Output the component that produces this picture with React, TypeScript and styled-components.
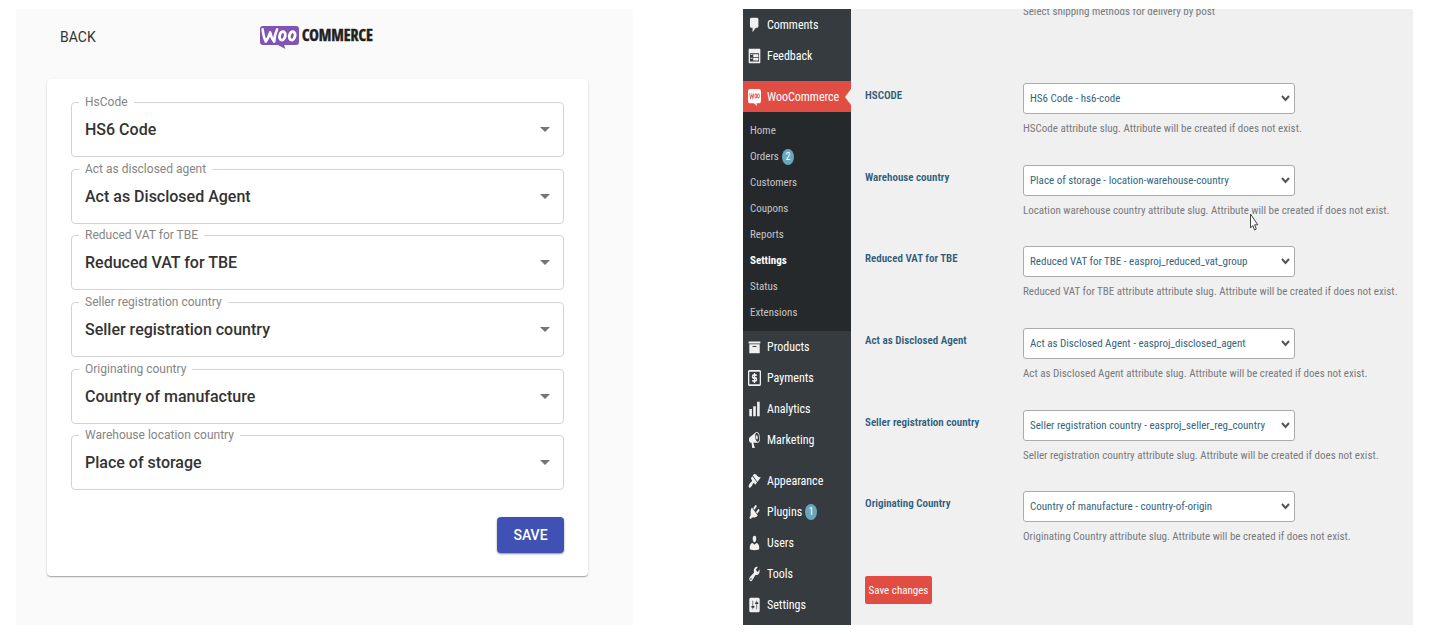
import React from "react";
import styled, { createGlobalStyle } from "styled-components";

const GlobalStyle = createGlobalStyle`
  *, *::before, *::after { box-sizing: border-box; }
  body { margin: 0; background: #fff; }
  button, select { font: inherit; margin: 0; }
  ul { list-style: none; margin: 0; padding: 0; }
`;

const Page = styled.main`
  display: grid;
  grid-template-columns: 617fr 670fr;
  gap: 110px;
  padding: 9px 26px 17px 16px;
`;

/* ---------- Merchant dashboard ---------- */

const Dashboard = styled.section`
  background: #fafafa;
  padding: 0 45px 49px 31px;
  font-family: Roboto, "Liberation Sans", sans-serif;
`;

const TopBar = styled.header`
  display: grid;
  grid-template-columns: 1fr auto 1fr;
  align-items: center;
  height: 70px;
  padding-bottom: 15px;
`;

const BackButton = styled.button`
  justify-self: start;
  padding: 0 13px;
  border: 0;
  background: none;
  color: #333;
  font-size: 14px;
  line-height: 24px;
`;

const Card = styled.form`
  padding: 23px 24px;
  border-radius: 4px;
  background: #fff;
  box-shadow: 0 1px 1px rgba(0, 0, 0, 0.28), 0 1px 3px rgba(0, 0, 0, 0.1);
`;

const FieldList = styled.div`
  display: grid;
  grid-auto-rows: 1fr;
  min-height: 400px;
`;

const Field = styled.div`
  position: relative;
`;

const FieldLabel = styled.label`
  position: absolute;
  top: -8px;
  left: 8px;
  padding: 0 6px;
  background: #fff;
  color: #858585;
  font-size: 12px;
  line-height: 16px;
`;

const FieldSelect = styled.select`
  appearance: none;
  display: block;
  width: 100%;
  height: 55px;
  padding: 0 40px 0 13px;
  border: 1px solid #d3d3d3;
  border-radius: 4px;
  background: #fff;
  color: #333;
  font-size: 16px;
  font-weight: 500;
`;

const FieldArrow = styled.svg`
  position: absolute;
  top: 25px;
  right: 14px;
  pointer-events: none;
`;

const Actions = styled.div`
  display: flex;
  justify-content: flex-end;
  padding-top: 15px;
`;

const SaveButton = styled.button`
  width: 67px;
  height: 36px;
  border: 0;
  border-radius: 4px;
  background: #3f51b5;
  color: #fff;
  font-size: 14px;
  font-weight: 500;
  box-shadow: 0 1px 2px rgba(0, 0, 0, 0.45);
`;

/* ---------- Store admin ---------- */

const Admin = styled.section`
  display: grid;
  grid-template-columns: 108px 1fr;
  overflow: hidden;
  background: #f0f0f0;
  font-family: "Roboto Condensed", Roboto, sans-serif;
  font-size: 11px;
`;

const Sidebar = styled.nav`
  background: #363b3f;
`;

const MenuGroup = styled.ul`
  margin-bottom: 10px;
`;

const MenuLink = styled.a<{ $active?: boolean }>`
  position: relative;
  display: flex;
  align-items: center;
  gap: 6px;
  height: 31px;
  padding-left: 5px;
  background: ${(p) => (p.$active ? "#e14d43" : "transparent")};
  color: #fff;
  font-size: 12px;
  text-decoration: none;
`;

const ActiveNotch = styled.svg`
  position: absolute;
  top: 8px;
  right: 0;
`;

const Submenu = styled.ul`
  display: grid;
  grid-auto-rows: 1fr;
  min-height: 219px;
  padding: 6px 0;
  background: #26292c;
`;

const SubLink = styled.a<{ $current?: boolean }>`
  display: flex;
  align-items: center;
  height: 100%;
  padding-left: 7px;
  color: ${(p) => (p.$current ? "#fff" : "#c3c4c5")};
  font-weight: ${(p) => (p.$current ? 700 : 400)};
  text-decoration: none;
`;

const Count = styled.span`
  display: inline-flex;
  align-items: center;
  justify-content: center;
  width: 12px;
  height: 16px;
  margin-left: 3px;
  border-radius: 50%;
  background: #69a8bb;
  color: #fff;
  font-size: 10px;
  font-weight: 400;
`;

const Content = styled.form`
  padding: 0 14px 21px;
`;

const SettingRow = styled.div`
  display: grid;
  grid-template-columns: 158px 1fr;
  align-items: start;
`;

const ShippingRow = styled(SettingRow)`
  margin: -5px 0 63px;
`;

const SettingList = styled.div`
  display: grid;
  grid-auto-rows: 1fr;
  min-height: 490px;
`;

const SettingLabel = styled.label`
  color: #2f5d7c;
  font-weight: 600;
  line-height: 26px;
`;

const SelectBox = styled.div`
  position: relative;
  width: 272px;
  margin-bottom: 7px;
`;

const SettingSelect = styled.select`
  appearance: none;
  display: block;
  width: 100%;
  height: 31px;
  padding: 0 26px 0 6px;
  border: 1px solid #a9abad;
  border-radius: 3px;
  background: #fff;
  color: #33657f;
`;

const Chevron = styled.svg`
  position: absolute;
  top: 12px;
  right: 5px;
  pointer-events: none;
`;

const Help = styled.p`
  grid-column: 2;
  margin: 0;
  color: #777a7d;
  line-height: 16px;
  white-space: nowrap;
`;

const SaveChanges = styled.button`
  display: block;
  width: 67px;
  height: 28px;
  margin-top: 3px;
  padding: 0;
  border: 0;
  border-radius: 2px;
  background: #e14d43;
  color: #fff;
`;

const Pointer = styled.svg`
  position: absolute;
  top: 48px;
  left: 227px;
  pointer-events: none;
`;

/* ---------- Drawings ---------- */

const WooLogo = () => (
  <svg width="117" height="24" viewBox="0 0 117 24" role="img" aria-label="WooCommerce">
    <path
      d="M4 1h33a3 3 0 0 1 3 3v13a3 3 0 0 1-3 3H25l1.500 4L19 20H4a3 3 0 0 1-3-3V4a3 3 0 0 1 3-3z"
      fill="#7f54b3"
    />
    <g fill="none" stroke="#fff" strokeLinecap="round" strokeLinejoin="round">
      <path d="M3.600 4.400C4.200 9 5.200 13.500 6.800 16.600 8.600 14 10.200 10.600 11.200 7.400c.7 4 2 7 4 9.200.2-4.600 1-8.600 2.900-12.200" strokeWidth="2.600" />
      <ellipse cx="23.400" cy="10.800" rx="2.800" ry="4.300" transform="rotate(14 23.400 10.800)" strokeWidth="2.800" />
      <ellipse cx="33.200" cy="10.800" rx="2.800" ry="4.300" transform="rotate(14 33.200 10.800)" strokeWidth="2.800" />
    </g>
    <text x="43" y="16" fill="#1f1f1f" stroke="#1f1f1f" strokeWidth="0.500" fontFamily="'Open Sans Condensed', 'Roboto Condensed', sans-serif" fontWeight="700" fontSize="16">
      COMMERCE
    </text>
  </svg>
);

const iconPaths = {
  comments: "M5 2h9c1.100 0 2 .9 2 2v7c0 1.100-.9 2-2 2h-2l-5 5v-5H5c-1.100 0-2-.9-2-2V4c0-1.100.9-2 2-2z",
  feedback:
    "M2 2h16c.55 0 1 .45 1 1v14c0 .55-.45 1-1 1H2c-.55 0-1-.45-1-1V3c0-.55.45-1 1-1zm15 14V7H3v9h14zM4 8v1h3V8H4zm4 0v3h8V8H8zm-4 4v1h3v-1H4zm4 0v3h8v-3H8z",
  products: "M19 4v2H1V4h18zM2 7h16v10H2V7zm11 3V9H7v1h6z",
  analytics: "M18 18V2h-4v16h4zm-6 0V7H8v11h4zm-6 0v-8H2v8h4z",
  marketing:
    "M18.150 5.940c.46 1.620.38 3.220-.02 4.480-.42 1.280-1.260 2.180-2.300 2.480-.16.06-.26.06-.4.06-.06.02-.12.02-.18.02-.06.02-.14.02-.22.02h-6.800l2.220 5.500c.02.14-.06.26-.14.34-.08.1-.24.16-.34.16H6.950c-.1 0-.26-.06-.34-.16-.08-.08-.16-.2-.14-.34l-1-5.500H4.250l-.02-.02c-.5.06-1.080-.18-1.540-.62s-.88-1.080-1.060-1.880c-.24-.8-.2-1.560-.02-2.200.18-.62.58-1.080 1.060-1.300l.02-.02 9-5.400c.1-.06.18-.1.24-.16.06-.04.14-.08.24-.12.16-.08.28-.12.5-.18 1.040-.3 2.240.1 3.220.98s1.840 2.240 2.260 3.860zm-2.580 5.980h-.02c.4-.1.74-.34 1.040-.7.58-.7.86-1.760.86-3.040 0-.64-.1-1.300-.28-1.980-.34-1.360-1.020-2.500-1.780-3.240s-1.680-1.100-2.460-.88c-.82.22-1.400.96-1.700 2-.32 1.040-.28 2.360.06 3.720.38 1.360 1 2.500 1.800 3.240.78.74 1.620 1.100 2.480.88zm-2.540-7.080c.22-.04.42-.02.62.04.38.16.76.48 1.020 1s.42 1.200.42 1.780c0 .3-.04.56-.12.8-.18.48-.44.84-.86.94-.34.1-.8-.06-1.140-.4s-.64-.86-.78-1.500c-.18-.62-.12-1.240.02-1.720s.48-.84.82-.94z",
  appearance:
    "M14.480 11.060L7.410 3.990l1.500-1.500c.5-.56 2.300-.47 3.510.32 1.210.8 1.430 1.280 2.910 2.100 1.180.64 2.450 1.260 4.450.85zm-.71.71L6.700 4.700 4.930 6.470c-.39.39-.39 1.020 0 1.410l1.060 1.060c.39.39.39 1.030 0 1.420-.6.6-1.430 1.110-2.210 1.690-.35.26-.7.53-1.010.84C1.430 14.230.4 16.080 1.400 17.070c.99 1 2.840-.03 4.180-1.360.31-.31.58-.66.85-1.020.57-.78 1.080-1.610 1.690-2.210.39-.39 1.020-.39 1.410 0l1.060 1.060c.39.39 1.020.39 1.410 0z",
  plugins:
    "M13.110 4.360L9.870 7.600 8 5.730l3.240-3.240c.35-.34 1.050-.2 1.560.32.52.51.66 1.210.31 1.550zm-8 1.770l.91-1.120 9.010 9.010-1.190.84c-.71.71-2.630 1.160-3.820 1.160H6.140L4.900 17.260c-.59.59-1.540.59-2.120 0-.59-.58-.59-1.530 0-2.120l1.240-1.240v-3.880c0-1.130.4-3.190 1.090-3.890zm7.260 3.970l3.240-3.240c.34-.35 1.040-.21 1.550.31.52.51.66 1.210.31 1.550l-3.240 3.250z",
  users:
    "M10 9.250c-2.270 0-2.730-3.440-2.730-3.440C7 4.020 7.820 2 9.970 2c2.160 0 2.980 2.020 2.710 3.810 0 0-.41 3.440-2.680 3.440zm0 2.570L12.720 10c2.390 0 4.520 2.330 4.520 4.530v2.490s-3.650 1.130-7.240 1.130c-3.650 0-7.240-1.130-7.240-1.130v-2.490c0-2.250 1.940-4.480 4.470-4.480z",
  tools:
    "M16.680 9.770c-1.340 1.340-3.300 1.670-4.950.99l-5.410 6.520c-.99.99-2.590.99-3.580 0s-.99-2.590 0-3.570l6.520-5.420c-.68-1.650-.35-3.610.99-4.950 1.280-1.280 3.120-1.620 4.720-1.060l-2.890 2.890 2.820 2.820 2.860-2.870c.53 1.580.18 3.390-1.080 4.650zM3.810 16.210c.4.39 1.040.39 1.430 0 .4-.4.4-1.040 0-1.430-.39-.4-1.030-.4-1.430 0-.39.39-.39 1.030 0 1.430z",
  settings:
    "M18 16V4c0-1.100-.9-2-2-2H4c-1.100 0-2 .9-2 2v12c0 1.100.9 2 2 2h12c1.100 0 2-.9 2-2zM8 11h1c.55 0 1 .45 1 1s-.45 1-1 1H8v1.500c0 .28-.22.5-.5.5s-.5-.22-.5-.5V13H6c-.55 0-1-.45-1-1s.45-1 1-1h1V5.500c0-.28.22-.5.5-.5s.5.22.5.5V11zm5-2h-1c-.55 0-1-.45-1-1s.45-1 1-1h1V5.500c0-.28.22-.5.5-.5s.5.22.5.5V7h1c.55 0 1 .45 1 1s-.45 1-1 1h-1v5.500c0 .28-.22.5-.5.5s-.5-.22-.5-.5V9z",
};

type IconName = keyof typeof iconPaths | "payments" | "woo";

const IconSvg = styled.svg`
  flex: none;
`;

const MenuIcon = ({ name }: { name: IconName }) => (
  <IconSvg width="13" height="18" viewBox="0 0 20 20" preserveAspectRatio="none" fill="#f0f0f1" aria-hidden="true">
    {name === "woo" && (
      <>
        <path d="M3 1h14a3 3 0 0 1 3 3v10a3 3 0 0 1-3 3h-4l1 3-5-3H3a3 3 0 0 1-3-3V4a3 3 0 0 1 3-3z" fill="#fff" />
        <g fill="none" stroke="#e14d43" strokeWidth="1.200">
          <path d="M2.500 6l1.500 5.500L6 7l1.500 4.500L9 6" />
          <ellipse cx="12" cy="8.700" rx="1.400" ry="2.400" />
          <ellipse cx="16" cy="8.700" rx="1.400" ry="2.400" />
        </g>
      </>
    )}
    {name === "payments" && (
      <g fill="none" stroke="#f0f0f1">
        <rect x="1" y="2" width="18" height="16" rx="1" strokeWidth="2" />
        <path d="M13.500 6.800H8.500q-1.700 0-1.700 1.600t1.700 1.600h3q1.700 0 1.700 1.600t-1.700 1.600H6.500M10 4.500v11" strokeWidth="2" />
      </g>
    )}
    {name !== "woo" && name !== "payments" && <path d={iconPaths[name]} fillRule="evenodd" />}
  </IconSvg>
);

/* ---------- Data ---------- */

const dashboardFields = [
  ["HsCode", "HS6 Code"],
  ["Act as disclosed agent", "Act as Disclosed Agent"],
  ["Reduced VAT for TBE", "Reduced VAT for TBE"],
  ["Seller registration country", "Seller registration country"],
  ["Originating country", "Country of manufacture"],
  ["Warehouse location country", "Place of storage"],
];

const settings = [
  ["HSCODE", "HS6 Code - hs6-code", "HSCode attribute slug. Attribute will be created if does not exist."],
  ["Warehouse country", "Place of storage - location-warehouse-country", "Location warehouse country attribute slug. Attribute will be created if does not exist."],
  ["Reduced VAT for TBE", "Reduced VAT for TBE - easproj_reduced_vat_group", "Reduced VAT for TBE attribute attribute slug. Attribute will be created if does not exist."],
  ["Act as Disclosed Agent", "Act as Disclosed Agent - easproj_disclosed_agent", "Act as Disclosed Agent attribute slug. Attribute will be created if does not exist."],
  ["Seller registration country", "Seller registration country - easproj_seller_reg_country", "Seller registration country attribute slug. Attribute will be created if does not exist."],
  ["Originating Country", "Country of manufacture - country-of-origin", "Originating Country attribute slug. Attribute will be created if does not exist."],
];

const submenu: { text: string; count?: number; current?: boolean }[] = [
  { text: "Home" },
  { text: "Orders", count: 2 },
  { text: "Customers" },
  { text: "Coupons" },
  { text: "Reports" },
  { text: "Settings", current: true },
  { text: "Status" },
  { text: "Extensions" },
];

type Item = { icon: IconName; text: string; count?: number };

const topItems: Item[] = [
  { icon: "comments", text: "Comments" },
  { icon: "feedback", text: "Feedback" },
];
const storeItems: Item[] = [
  { icon: "products", text: "Products" },
  { icon: "payments", text: "Payments" },
  { icon: "analytics", text: "Analytics" },
  { icon: "marketing", text: "Marketing" },
];
const siteItems: Item[] = [
  { icon: "appearance", text: "Appearance" },
  { icon: "plugins", text: "Plugins", count: 1 },
  { icon: "users", text: "Users" },
  { icon: "tools", text: "Tools" },
  { icon: "settings", text: "Settings" },
];

const MenuItems = ({ items }: { items: Item[] }) => (
  <>
    {items.map((item) => (
      <li key={item.text}>
        <MenuLink href="#">
          <MenuIcon name={item.icon} />
          <span>
            {item.text}
            {item.count && <Count>{item.count}</Count>}
          </span>
        </MenuLink>
      </li>
    ))}
  </>
);

export default function App() {
  return (
    <>
      <GlobalStyle />
      <Page>
        <Dashboard>
          <TopBar>
            <BackButton type="button">BACK</BackButton>
            <WooLogo />
          </TopBar>
          <Card>
            <FieldList>
              {dashboardFields.map(([label, value], i) => (
                <Field key={label}>
                  <FieldSelect id={`field-${i}`}>
                    <option>{value}</option>
                  </FieldSelect>
                  <FieldLabel htmlFor={`field-${i}`}>{label}</FieldLabel>
                  <FieldArrow width="10" height="5" viewBox="0 0 10 5" aria-hidden="true">
                    <path d="M0 0h10L5 5z" fill="#757575" />
                  </FieldArrow>
                </Field>
              ))}
            </FieldList>
            <Actions>
              <SaveButton type="button">SAVE</SaveButton>
            </Actions>
          </Card>
        </Dashboard>

        <Admin>
          <Sidebar>
            <MenuGroup>
              <MenuItems items={topItems} />
            </MenuGroup>
            <MenuGroup as="div">
              <MenuLink href="#" $active>
                <MenuIcon name="woo" />
                <span>WooCommerce</span>
                <ActiveNotch width="6" height="16" viewBox="0 0 6 16" aria-hidden="true">
                  <path d="M6 0v16L0 8z" fill="#f0f0f0" />
                </ActiveNotch>
              </MenuLink>
              <Submenu>
                {submenu.map((item) => (
                  <li key={item.text}>
                    <SubLink href="#" $current={item.current}>
                      {item.text}
                      {item.count && <Count>{item.count}</Count>}
                    </SubLink>
                  </li>
                ))}
              </Submenu>
              <ul>
                <MenuItems items={storeItems} />
              </ul>
            </MenuGroup>
            <ul>
              <MenuItems items={siteItems} />
            </ul>
          </Sidebar>

          <Content>
            <ShippingRow>
              <Help>Select shipping methods for delivery by post</Help>
            </ShippingRow>
            <SettingList>
              {settings.map(([label, value, help], i) => (
                <SettingRow key={label}>
                  <SettingLabel htmlFor={`setting-${i}`}>{label}</SettingLabel>
                  <div>
                    <SelectBox>
                      <SettingSelect id={`setting-${i}`}>
                        <option>{value}</option>
                      </SettingSelect>
                      <Chevron width="9" height="7" viewBox="0 0 9 7" aria-hidden="true">
                        <path d="M1 1l3.500 4L8 1" fill="none" stroke="#555" strokeWidth="2" />
                      </Chevron>
                      {i === 1 && (
                        <Pointer width="9" height="18" viewBox="0 0 9 18" aria-hidden="true">
                          <path d="M.5 1v14l2.300-2.500 1.700 4.500 1.800-1-1.700-4.200h3.200z" fill="#fff" stroke="#444" />
                        </Pointer>
                      )}
                    </SelectBox>
                    <Help>{help}</Help>
                  </div>
                </SettingRow>
              ))}
            </SettingList>
            <SaveChanges type="button">Save changes</SaveChanges>
          </Content>
        </Admin>
      </Page>
    </>
  );
}
